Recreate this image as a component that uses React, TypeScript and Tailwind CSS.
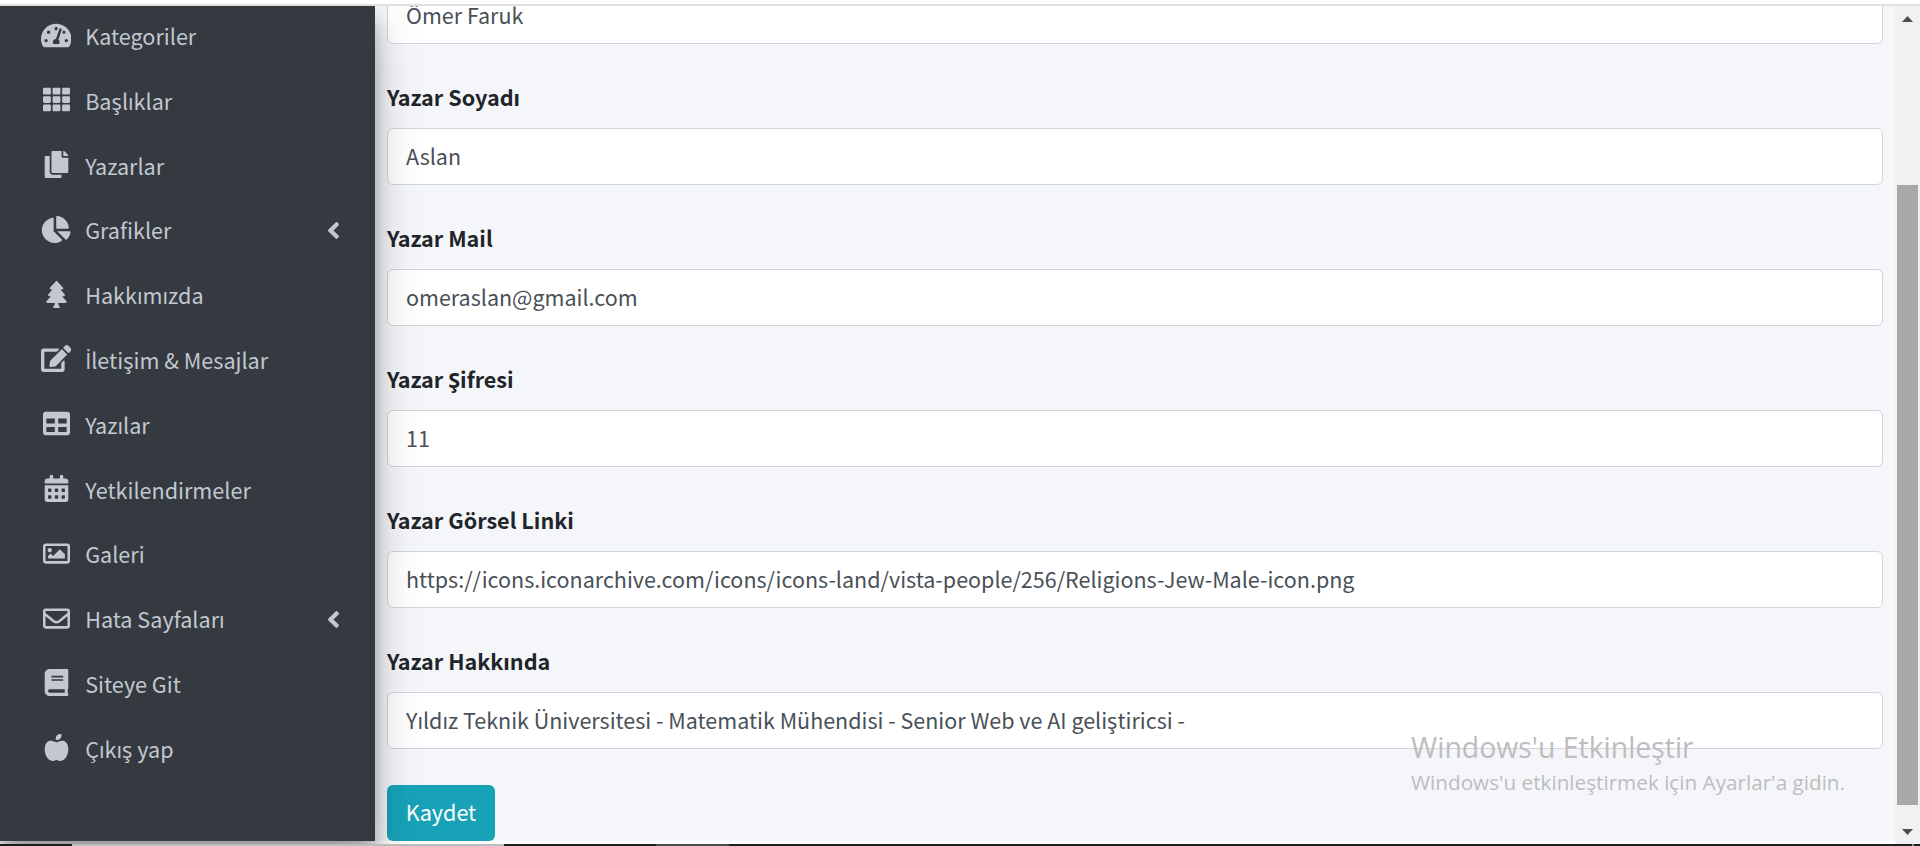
import React from "react";
import type { IconType } from "react-icons";
import {
  FaAngleLeft,
  FaAppleAlt,
  FaBook,
  FaCalendarAlt,
  FaChartPie,
  FaCopy,
  FaEdit,
  FaRegEnvelope,
  FaRegImage,
  FaTable,
  FaTachometerAlt,
  FaTh,
  FaTree,
} from "react-icons/fa";

type NavItem = { label: string; icon: IconType; wide?: boolean; nested?: boolean };

const navItems: NavItem[] = [
  { label: "Kategoriler", icon: FaTachometerAlt, wide: true },
  { label: "Başlıklar", icon: FaTh },
  { label: "Yazarlar", icon: FaCopy },
  { label: "Grafikler", icon: FaChartPie, wide: true, nested: true },
  { label: "Hakkımızda", icon: FaTree },
  { label: "İletişim & Mesajlar", icon: FaEdit, wide: true },
  { label: "Yazılar", icon: FaTable },
  { label: "Yetkilendirmeler", icon: FaCalendarAlt },
  { label: "Galeri", icon: FaRegImage },
  { label: "Hata Sayfaları", icon: FaRegEnvelope, nested: true },
  { label: "Siteye Git", icon: FaBook },
  { label: "Çıkış yap", icon: FaAppleAlt },
];

const fields = [
  { value: "Ömer Faruk" },
  { label: "Yazar Soyadı", value: "Aslan" },
  { label: "Yazar Mail", value: "omeraslan@gmail.com" },
  { label: "Yazar Şifresi", value: "11" },
  {
    label: "Yazar Görsel Linki",
    value: "https://icons.iconarchive.com/icons/icons-land/vista-people/256/Religions-Jew-Male-icon.png",
  },
  {
    label: "Yazar Hakkında",
    value: "Yıldız Teknik Üniversitesi - Matematik Mühendisi - Senior Web ve AI geliştiricsi -",
  },
];

// The dotted capital İ has no glyph of its own in the CJK family.
function NavLabel({ text }: { text: string }) {
  if (!text.startsWith("İ")) return <>{text}</>;
  return (
    <>
      <span className="font-['Open_Sans',sans-serif] leading-none">İ</span>
      {text.slice(1)}
    </>
  );
}

function Sidebar() {
  return (
    <aside className="relative z-10 w-[375px] shrink-0 bg-[#343a40] pt-[13px] pl-[37px] text-[#c2c7d0] shadow-[0_21px_42px_rgba(0,0,0,0.25),0_15px_15px_rgba(0,0,0,0.22)]">
      <nav className="flex flex-col gap-[28.8px]">
        {navItems.map(({ label, icon: Icon, wide, nested }) => (
          <a key={label} className="flex h-9 items-center">
            <span className="flex w-[38.4px] justify-center pb-[4px]">
              <Icon className={wide ? "h-[27px] w-[30.4px] shrink-0" : "h-[27px] w-[27px] shrink-0"} />
            </span>
            <span className="ml-[9.8px] h-[38px] pb-[2px] leading-9 whitespace-nowrap">
              <NavLabel text={label} />
            </span>
            {nested && <FaAngleLeft className="mr-[28px] mb-[2px] ml-auto h-[27px] w-[27px]" />}
          </a>
        ))}
      </nav>
    </aside>
  );
}

function AuthorForm() {
  return (
    <main className="flex min-w-0 flex-1 flex-col justify-end overflow-hidden bg-[#f4f6f9] pr-3 pl-3">
      <form className="flex flex-col">
        {fields.map(({ label, value }) => (
          <div key={value} className="mb-9 flex flex-col">
            {label && <label className="mb-3 h-9 leading-[34px] font-bold text-[#212529]">{label}</label>}
            <div className="h-[57px] rounded-[6px] border border-[#ced4da] bg-white px-[18px] text-[21.5px] leading-[53px] whitespace-nowrap text-[#495057]">
              {value}
            </div>
          </div>
        ))}
        <button
          type="button"
          className="h-14 w-[108px] rounded-[6px] bg-[#17a2b8] pb-[2px] leading-[54px] text-white"
        >
          Kaydet
        </button>
      </form>
    </main>
  );
}

function Scrollbar() {
  return (
    <div className="flex w-[25px] shrink-0 flex-col items-center bg-[#f1f1f1] pt-[10px] pb-[9px]">
      <svg className="h-[6px] w-[11px]" viewBox="0 0 11 6">
        <path d="M0 6 5.5 0 11 6Z" fill="#505050" />
      </svg>
      <div className="mt-[163px] h-[620px] w-[21px] bg-[#a8a8a8]" />
      <svg className="mt-[24px] h-[6px] w-[11px]" viewBox="0 0 11 6">
        <path d="M0 0 5.5 6 11 0Z" fill="#505050" />
      </svg>
    </div>
  );
}

export default function App() {
  return (
    <div className="relative flex h-[846px] w-[1920px] flex-col overflow-hidden bg-white font-['Noto_Sans_CJK_SC','Noto_Sans',sans-serif] text-[21.6px]">
      <div className="z-20 h-[6px] shrink-0 border-b-2 border-[#dfe1e0] bg-white" />
      <div className="flex h-[838px] shrink-0">
        <div className="flex h-[835px] min-w-0 flex-1">
          <Sidebar />
          <AuthorForm />
        </div>
        <Scrollbar />
      </div>
      <div className="z-20 flex h-[2px] shrink-0 bg-[#1b1f20]">
        <div className="w-[72px] bg-[#1a1c1c]" />
        <div className="w-[432px] bg-[#bcbcbc]" />
        <div className="w-[152px] bg-[#1a1c1c]" />
        <div className="w-[73px] bg-[#4b4d4e]" />
        <div className="mr-[6px] ml-auto w-[2px] bg-[#8a8c8d]" />
      </div>
      <div className="absolute top-[728px] left-[1411px] z-30 font-['Open_Sans','Noto_Sans',sans-serif] whitespace-nowrap text-[#bdbdbf]">
        <p className="text-[28.4px] leading-[38px]">Windows'u Etkinleştir</p>
        <p className="text-[20.7px] leading-[32px]">Windows'u etkinleştirmek için Ayarlar'a gidin.</p>
      </div>
    </div>
  );
}
